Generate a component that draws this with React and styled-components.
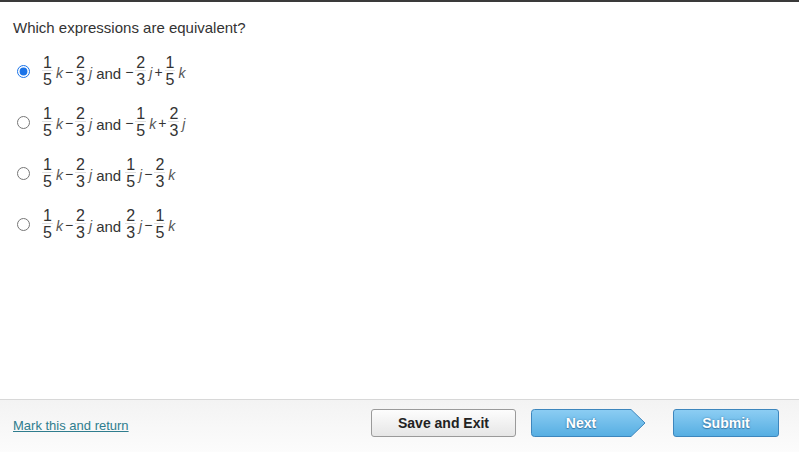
import React, { useState } from 'react';
import styled, { createGlobalStyle } from 'styled-components';

const GlobalStyle = createGlobalStyle`
  html, body {
    margin: 0;
    padding: 0;
    background: #fff;
    font-family: 'Liberation Sans', Arial, sans-serif;
  }
`;

const Page = styled.div`
  width: 799px;
  height: 452px;
  display: flex;
  flex-direction: column;
  border-top: 2px solid #3a3a3a;
  box-sizing: border-box;
`;

const Content = styled.div`
  flex: 1;
  padding: 17px 13px 0;
`;

const Question = styled.div`
  font-size: 15px;
  color: #333;
  margin-bottom: 18px;
`;

const Options = styled.div`
  display: flex;
  flex-direction: column;
  gap: 17px;
`;

const Option = styled.label`
  display: flex;
  align-items: center;
  height: 34px;
  cursor: pointer;
  font-size: 15px;
  color: #333;
  font-family: 'Liberation Sans', Arial, sans-serif;
`;

const Radio = styled.input`
  margin: 0 11px 0 4px;
  width: 13px;
  height: 13px;
  accent-color: #1a73e8;
`;

const Frac = styled.span`
  display: inline-flex;
  flex-direction: column;
  align-items: center;
  font-size: 16px;
  line-height: 15px;
  margin: 0 1px;
  color: #333;
`;

const Num = styled.span`
  padding: 0 1px 0;
  border-bottom: 1px solid #e0e0e0;
`;

const Den = styled.span`
  padding: 1px 1px 0;
`;

const Var = styled.span`
  font-style: italic;
  font-size: 14px;
  margin: 3px 1px 0 2px;
  color: #555;
`;

const Op = styled.span`
  font-size: 14px;
  margin: 2px 1px 0;
`;

const And = styled.span`
  margin: 4px 3px 0 3px;
`;

const Footer = styled.div`
  height: 53px;
  border-top: 1px solid #d8d8d8;
  background: linear-gradient(#f3f3f3, #fcfcfc);
  display: flex;
  align-items: center;
  padding: 0 13px;
  box-sizing: border-box;
`;

const Link = styled.a`
  color: #2f7d8e;
  font-size: 13px;
  text-decoration: underline;
  margin-top: -2px;
  cursor: pointer;
`;

const Buttons = styled.div`
  margin-left: auto;
  display: flex;
  align-items: center;
  margin-right: 7px;
  margin-top: -7px;
`;

const Button = styled.button`
  height: 28px;
  box-sizing: border-box;
  border-radius: 3px;
  font-family: 'Liberation Sans', Arial, sans-serif;
  font-weight: bold;
  font-size: 14px;
  cursor: pointer;
`;

const SaveButton = styled(Button)`
  width: 145px;
  border: 1px solid #9a9a9a;
  background: linear-gradient(#fdfdfd, #e6e6e6);
  color: #222;
`;

const BlueButton = styled(Button)`
  border: 1px solid #3d86bd;
  background: linear-gradient(#8ccdf3, #56aee2);
  color: #fff;
  text-shadow: 0 0 2px #3a7aa8, 0 1px 1px #3a7aa8;
`;

const SubmitButton = styled(BlueButton)`
  width: 106px;
  margin-left: 27px;
`;

const NextWrap = styled.div`
  position: relative;
  width: 115px;
  height: 28px;
  margin-left: 15px;
`;

const NextShape = styled.svg`
  display: block;
`;

const NextLabel = styled.span`
  position: absolute;
  left: 0;
  top: 0;
  width: 100px;
  line-height: 28px;
  text-align: center;
  color: #fff;
  font-weight: bold;
  font-size: 14px;
  text-shadow: 0 0 2px #3a7aa8, 0 1px 1px #3a7aa8;
  cursor: pointer;
`;

const F = ({ n, d }) => (
  <Frac>
    <Num>{n}</Num>
    <Den>{d}</Den>
  </Frac>
);

const Left = () => (
  <>
    <F n="1" d="5" />
    <Var>k</Var>
    <Op>−</Op>
    <F n="2" d="3" />
    <Var>j</Var>
    <And>and</And>
  </>
);

const rights = [
  <>
    <Op>−</Op><F n="2" d="3" /><Var>j</Var><Op>+</Op><F n="1" d="5" /><Var>k</Var>
  </>,
  <>
    <Op>−</Op><F n="1" d="5" /><Var>k</Var><Op>+</Op><F n="2" d="3" /><Var>j</Var>
  </>,
  <>
    <F n="1" d="5" /><Var>j</Var><Op>−</Op><F n="2" d="3" /><Var>k</Var>
  </>,
  <>
    <F n="2" d="3" /><Var>j</Var><Op>−</Op><F n="1" d="5" /><Var>k</Var>
  </>,
];

export default function App() {
  const [picked, setPicked] = useState(0);
  return (
    <>
      <GlobalStyle />
      <Page>
        <Content>
          <Question>Which expressions are equivalent?</Question>
          <Options>
            {rights.map((r, i) => (
              <Option key={i}>
                <Radio
                  type="radio"
                  name="answer"
                  checked={picked === i}
                  onChange={() => setPicked(i)}
                />
                <Left />
                {r}
              </Option>
            ))}
          </Options>
        </Content>
        <Footer>
          <Link>Mark this and return</Link>
          <Buttons>
            <SaveButton>Save and Exit</SaveButton>
            <NextWrap>
              <NextShape width="115" height="28" viewBox="0 0 115 28">
                <defs>
                  <linearGradient id="ng" x1="0" y1="0" x2="0" y2="1">
                    <stop offset="0" stopColor="#8ccdf3" />
                    <stop offset="1" stopColor="#56aee2" />
                  </linearGradient>
                </defs>
                <path
                  d="M3.5 0.5 H100 L114 14 L100 27.5 H3.5 Q0.5 27.5 0.5 24.5 V3.5 Q0.5 0.5 3.5 0.5 Z"
                  fill="url(#ng)"
                  stroke="#3d86bd"
                />
              </NextShape>
              <NextLabel>Next</NextLabel>
            </NextWrap>
            <SubmitButton>Submit</SubmitButton>
          </Buttons>
        </Footer>
      </Page>
    </>
  );
}
